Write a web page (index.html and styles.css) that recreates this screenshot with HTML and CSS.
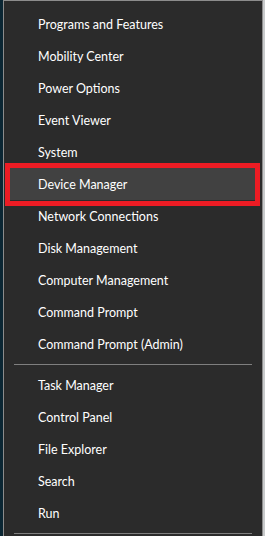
FILE: index.html
```html
<!DOCTYPE html>
<html lang="en">
<head>
  <meta charset="UTF-8" />
  <title>Quick Link Menu</title>
  <link rel="stylesheet" href="styles.css">
</head>
<body>

<div class="screen">
  <div class="desktop-left"></div>

  <div class="menu">
    <div class="menu-group">
      <div class="menu-item">Programs and Features</div>
      <div class="menu-item">Mobility Center</div>
      <div class="menu-item">Power Options</div>
      <div class="menu-item">Event Viewer</div>
      <div class="menu-item">System</div>
      <div class="menu-item active">Device Manager</div>
      <div class="menu-item">Network Connections</div>
      <div class="menu-item">Disk Management</div>
      <div class="menu-item">Computer Management</div>
      <div class="menu-item">Command Prompt</div>
      <div class="menu-item">Command Prompt (Admin)</div>
    </div>
    <div class="separator"></div>
    <div class="menu-group">
      <div class="menu-item">Task Manager</div>
      <div class="menu-item">Control Panel</div>
      <div class="menu-item">File Explorer</div>
      <div class="menu-item">Search</div>
      <div class="menu-item">Run</div>
    </div>
    <div class="separator"></div>
  </div>

  <div class="desktop-right"></div>
</div>

</body>
</html>
```

FILE: styles.css
```css
html, body {
  margin: 0;
  padding: 0;
  background: #2b2b2b;
  font-family: 'Lato', sans-serif;
  overflow: hidden;
}

.screen {
  display: flex;
  height: 536px;
}

.desktop-left {
  width: 3px;
  background: #0b2633;
}

.desktop-right {
  flex: 1;
  background: #c9cbcc;
}

.menu {
  width: 260px;
  box-sizing: border-box;
  background: #2b2b2b;
  border: 1px solid #8c8c8c;
  border-bottom: none;
  padding-top: 7px;
}

.menu-item {
  position: relative;
  height: 31px;
  padding-top: 1px;
  line-height: 31px;
  padding-left: 34px;
  color: #ffffff;
  font-size: 12.5px;
  white-space: nowrap;
}

.menu-item.active {
  background: #414141;
  margin: 0 7px 0 6px;
  padding-left: 28px;
}

/* red annotation box drawn over the hovered row */
.menu-item.active::after {
  content: '';
  position: absolute;
  left: -5px;
  right: -5px;
  top: -5px;
  bottom: -6px;
  border: 5px solid #ed1c24;
}

.separator {
  height: 1px;
  margin: 4px 10px 4px 10px;
  background: #7f7f7f;
}
```
